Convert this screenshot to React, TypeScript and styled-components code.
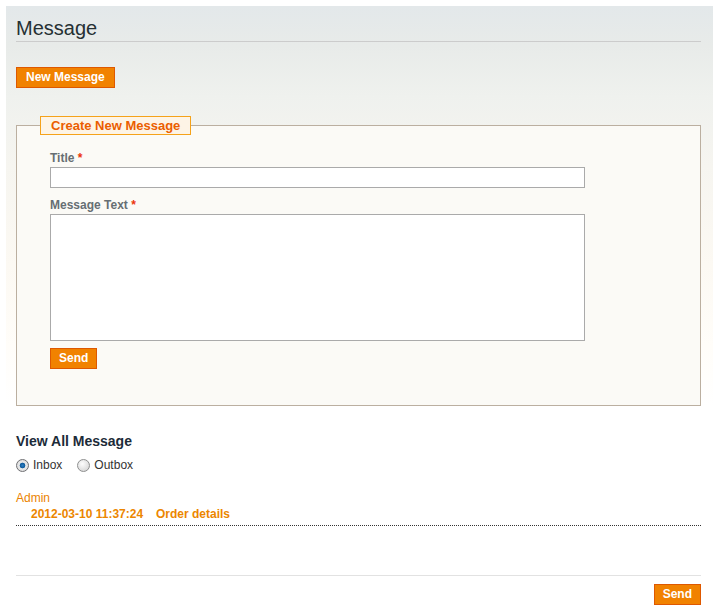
import React, { useState } from 'react';
import styled, { createGlobalStyle } from 'styled-components';

const GlobalStyle = createGlobalStyle`
    html, body {
        margin: 0;
        padding: 0;
        background: #fff;
    }
    body {
        font-family: "Liberation Sans", Arial, sans-serif;
        font-size: 12px;
        color: #2f2f2f;
    }
`;

const Page = styled.div`
    margin: 6px 8px 0 6px;
    padding: 10px 12px 20px 10px;
    background: linear-gradient(
        180deg,
        #e3e8ea 0px,
        #e8ebe9 40px,
        #eff1ee 90px,
        #f6f5f0 160px,
        #fcf9f3 260px,
        #fffdf9 340px,
        #fff 400px
    );
`;

const Header = styled.h1`
    margin: 0;
    padding: 0 0 1px;
    font-size: 20px;
    line-height: 24px;
    font-weight: normal;
    color: #253033;
    border-bottom: 1px solid #ccc;
`;

const Button = styled.button`
    display: inline-block;
    height: 21px;
    padding: 0 ${(p: { $pad?: number }) => p.$pad ?? 8}px;
    margin: 0;
    border: 1px solid #de5800;
    background: #f18200;
    color: #fff;
    font-family: "Liberation Sans", Arial, sans-serif;
    font-size: 12px;
    font-weight: bold;
    line-height: 19px;
    cursor: pointer;
`;

const Toolbar = styled.div`
    margin-top: 25px;
    display: flex;
`;

const Fieldset = styled.fieldset`
    margin: 28px 0 0;
    padding: 15px 0 36px 23px;
    border: 1px solid #bbafa0;
    background: #fbfaf6;
    min-width: 0;
`;

const Legend = styled.legend`
    padding: 0 10px;
    height: 19px;
    box-sizing: border-box;
    border: 1px solid #f5a21a;
    background: #fdf4e6;
    color: #eb5e00;
    font-size: 13px;
    font-weight: bold;
    line-height: 17px;
`;

const FormBody = styled.div`
    padding-left: 10px;
    display: flex;
    flex-direction: column;
    align-items: flex-start;
`;

const Label = styled.label`
    display: block;
    font-size: 12px;
    font-weight: bold;
    line-height: 16px;
    color: #666e73;
    margin: ${(p: { $top?: number }) => p.$top ?? 0}px 0 1px;
`;

const Required = styled.span`
    color: #eb340a;
`;

const TextInput = styled.input`
    box-sizing: border-box;
    width: 535px;
    height: 21px;
    margin: 0;
    padding: 2px 4px;
    border: 1px solid #aaa;
    background: #fff;
    font-family: "Liberation Sans", Arial, sans-serif;
    font-size: 12px;
    outline: none;
`;

const TextArea = styled.textarea`
    box-sizing: border-box;
    display: block;
    width: 535px;
    height: 127px;
    margin: 0 0 7px;
    padding: 2px 4px;
    border: 1px solid #aaa;
    background: #fff;
    resize: none;
    font-family: "Liberation Sans", Arial, sans-serif;
    font-size: 12px;
    outline: none;
`;

const SectionTitle = styled.h3`
    margin: 27px 0 0;
    font-size: 14px;
    line-height: 17px;
    font-weight: bold;
    color: #1c2b39;
`;

const RadioRow = styled.div`
    display: flex;
    align-items: center;
    gap: 15px;
    margin-top: 8px;
    height: 15px;
`;

const RadioLabel = styled.label`
    display: flex;
    align-items: center;
    gap: 4px;
    font-size: 12px;
    line-height: 15px;
    color: #333;
    cursor: pointer;
`;

const Radio = styled.input.attrs({ type: 'radio' })`
    appearance: none;
    -webkit-appearance: none;
    box-sizing: border-box;
    width: 13px;
    height: 13px;
    margin: 0;
    border-radius: 50%;
    border: 1px solid #8e8f8f;
    background: radial-gradient(circle at 40% 35%, #fdfdfd 0, #dcdcdc 70%, #c8c8c8 100%);
    cursor: pointer;

    &:checked {
        background: radial-gradient(circle, #2d7fc4 0, #0f5a9a 2.5px, #e9e9e9 3.2px, #d6d6d6 100%);
        border-color: #6f7073;
    }
`;

const MessageList = styled.div`
    margin-top: 18px;
`;

const MessageItem = styled.div`
    padding-bottom: 3px;
    border-bottom: 1px dotted #333;
`;

const Sender = styled.div`
    color: #eb8300;
    font-size: 12px;
    line-height: 15px;
`;

const Meta = styled.div`
    display: flex;
    padding-left: 15px;
    font-size: 12px;
    line-height: 16px;
    font-weight: bold;
    color: #ec8600;
`;

const MetaDate = styled.span`
    width: 125px;
`;

const Footer = styled.div`
    margin-top: 49px;
    padding-top: 8px;
    border-top: 1px solid #e2e2e2;
    display: flex;
    justify-content: flex-end;
`;

const messages = [
    { from: 'Admin', date: '2012-03-10 11:37:24', subject: 'Order details' },
];

export default function App() {
    const [box, setBox] = useState<'inbox' | 'outbox'>('inbox');

    return (
        <>
            <GlobalStyle />
            <Page>
                <Header>Message</Header>
                <Toolbar>
                    <Button $pad={9}>New Message</Button>
                </Toolbar>

                <Fieldset>
                    <Legend>Create New Message</Legend>
                    <FormBody>
                        <Label htmlFor="title">Title <Required>*</Required></Label>
                        <TextInput id="title" type="text" />
                        <Label htmlFor="text" $top={9}>Message Text <Required>*</Required></Label>
                        <TextArea id="text" />
                        <Button>Send</Button>
                    </FormBody>
                </Fieldset>

                <SectionTitle>View All Message</SectionTitle>
                <RadioRow>
                    <RadioLabel>
                        <Radio name="box" checked={box === 'inbox'} onChange={() => setBox('inbox')} />
                        Inbox
                    </RadioLabel>
                    <RadioLabel>
                        <Radio name="box" checked={box === 'outbox'} onChange={() => setBox('outbox')} />
                        Outbox
                    </RadioLabel>
                </RadioRow>

                <MessageList>
                    {messages.map((m) => (
                        <MessageItem key={m.date}>
                            <Sender>{m.from}</Sender>
                            <Meta>
                                <MetaDate>{m.date}</MetaDate>
                                <span>{m.subject}</span>
                            </Meta>
                        </MessageItem>
                    ))}
                </MessageList>

                <Footer>
                    <Button>Send</Button>
                </Footer>
            </Page>
        </>
    );
}
